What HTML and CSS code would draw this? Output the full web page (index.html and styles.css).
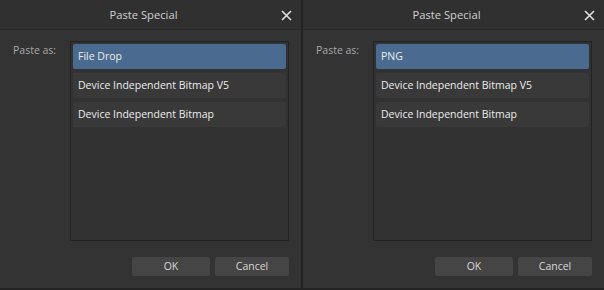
FILE: index.html
```html
<!DOCTYPE html>
<html lang="en">
<head>
	<meta charset="UTF-8">
	<title>Paste Special</title>
	<link rel="stylesheet" href="styles.css">
</head>
<body>
	<div class="screen">
		<div class="dialog">
			<div class="titlebar">
				<span class="title">Paste Special</span>
				<span class="close">
					<svg width="11" height="11" viewBox="0 0 11 11"><path d="M1 1L10 10M10 1L1 10" stroke="#e0e0e0" stroke-width="1.6"/></svg>
				</span>
			</div>
			<div class="content">
				<div class="row">
					<span class="label">Paste as:</span>
					<div class="list">
						<div class="item on">File Drop</div>
						<div class="item">Device Independent Bitmap V5</div>
						<div class="item">Device Independent Bitmap</div>
					</div>
				</div>
				<div class="buttons">
					<a href="javascript:;" class="btn ok">OK</a>
					<a href="javascript:;" class="btn cancel">Cancel</a>
				</div>
			</div>
		</div>
		<div class="dialog">
			<div class="titlebar">
				<span class="title">Paste Special</span>
				<span class="close">
					<svg width="11" height="11" viewBox="0 0 11 11"><path d="M1 1L10 10M10 1L1 10" stroke="#e0e0e0" stroke-width="1.6"/></svg>
				</span>
			</div>
			<div class="content">
				<div class="row">
					<span class="label">Paste as:</span>
					<div class="list">
						<div class="item on">PNG</div>
						<div class="item">Device Independent Bitmap V5</div>
						<div class="item">Device Independent Bitmap</div>
					</div>
				</div>
				<div class="buttons">
					<a href="javascript:;" class="btn ok">OK</a>
					<a href="javascript:;" class="btn cancel">Cancel</a>
				</div>
			</div>
		</div>
	</div>
</body>
</html>
```

FILE: styles.css
```css
*{
	margin: 0;
	padding: 0;
	box-sizing: border-box;
	text-decoration: none;
}
body {
	background: #232323;
	font-family: "Open Sans", "Noto Sans", sans-serif;
	font-size: 10.5px;
}
.screen {
	display: flex;
	gap: 2px;
	width: 604px;
	height: 290px;
}
.dialog {
	flex: 1;
	height: 288px;
	background: #333;
	display: flex;
	flex-direction: column;
}
.titlebar {
	height: 30px;
	background: #303030;
	border-bottom: 1px solid #2a2a2a;
	display: flex;
	align-items: center;
	justify-content: center;
	padding-right: 14px;
	position: relative;
}
.title {
	color: #d0d0d0;
	font-size: 11.2px;
}
.close {
	position: absolute;
	right: 9px;
	top: 10px;
	width: 11px;
	height: 11px;
	display: block;
}
.close svg {
	display: block;
}
.content {
	flex: 1;
	padding: 11px 11px 11px 13px;
	display: flex;
	flex-direction: column;
}
.row {
	display: flex;
}
.label {
	width: 57px;
	color: #a8a8a8;
	padding-top: 2px;
}
.list {
	width: 219px;
	height: 200px;
	border: 1px solid #222;
	background: #323232;
	padding: 2px;
	display: flex;
	flex-direction: column;
	gap: 4px;
}
.item {
	height: 25px;
	line-height: 25px;
	padding-left: 5px;
	background: #393939;
	color: #ececec;
	border-radius: 2px;
}
.item.on {
	background: #4a6a8f;
}
.buttons {
	margin-top: 16px;
	display: flex;
	justify-content: flex-end;
	gap: 5px;
	padding-right: 1px;
}
.btn {
	display: block;
	height: 19px;
	line-height: 19px;
	text-align: center;
	background: #454545;
	color: #d8d8d8;
	border-radius: 2px;
}
.ok {
	width: 78px;
}
.cancel {
	width: 74px;
}
```
